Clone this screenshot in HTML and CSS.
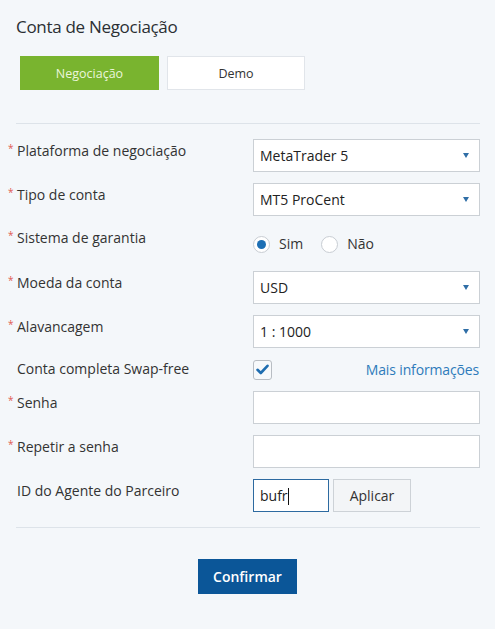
FILE: index.html
```html
<!DOCTYPE html>
<html lang="pt">
<head>
<meta charset="utf-8">
<title>Conta de Negociação</title>
<link rel="stylesheet" href="styles.css">
</head>
<body>
<div class="page">
  <h1 class="title">Conta de Negociação</h1>
  <div class="tabs">
    <div class="tab tab-active">Negociação</div>
    <div class="tab">Demo</div>
  </div>
  <div class="divider divider-top"></div>

  <div class="form">
    <div class="row">
      <div class="label"><span class="star">*</span>Plataforma de negociação</div>
      <div class="select"><span>MetaTrader 5</span><span class="arrow"></span></div>
    </div>
    <div class="row">
      <div class="label"><span class="star">*</span>Tipo de conta</div>
      <div class="select"><span>MT5 ProCent</span><span class="arrow"></span></div>
    </div>
    <div class="row">
      <div class="label label-radio"><span class="star">*</span>Sistema de garantia</div>
      <div class="radios">
        <span class="radio radio-on"></span><span class="radio-text">Sim</span>
        <span class="radio"></span><span class="radio-text">Não</span>
      </div>
    </div>
    <div class="row">
      <div class="label"><span class="star">*</span>Moeda da conta</div>
      <div class="select"><span>USD</span><span class="arrow"></span></div>
    </div>
    <div class="row">
      <div class="label"><span class="star">*</span>Alavancagem</div>
      <div class="select"><span>1 : 1000</span><span class="arrow"></span></div>
    </div>
    <div class="row row-check">
      <div class="label label-check"><span class="star"></span>Conta completa Swap-free</div>
      <div class="check-line">
        <span class="checkbox">
          <svg width="13" height="11" viewBox="0 0 13 11"><path d="M1.5 5.8 L4.8 9 L11.5 1.8" fill="none" stroke="#1f6db0" stroke-width="2.6" stroke-linecap="round" stroke-linejoin="round"/></svg>
        </span>
        <span class="link">Mais informações</span>
      </div>
    </div>
    <div class="row">
      <div class="label"><span class="star">*</span>Senha</div>
      <div class="input"></div>
    </div>
    <div class="row">
      <div class="label"><span class="star">*</span>Repetir a senha</div>
      <div class="input"></div>
    </div>
    <div class="row row-last">
      <div class="label"><span class="star"></span>ID do Agente do Parceiro</div>
      <div class="partner">
        <div class="input input-focus"><span>bufr</span><span class="caret"></span></div>
        <div class="btn-apply">Aplicar</div>
      </div>
    </div>
  </div>

  <div class="divider divider-bottom"></div>
  <div class="actions">
    <div class="btn-confirm">Confirmar</div>
  </div>
</div>
</body>
</html>
```

FILE: styles.css
```css
html, body {
  margin: 0;
  padding: 0;
  background: #f4f7fa;
}
body {
  font-family: "Open Sans", "Noto Sans", sans-serif;
  color: #333;
  width: 495px;
  height: 629px;
  overflow: hidden;
}
.page {
  padding: 15px 0 0 0;
}
.title {
  margin: 0 0 17px 16px;
  font-size: 17px;
  letter-spacing: -0.3px;
  line-height: 24px;
  font-weight: 400;
  color: #2b2f33;
}
.tabs {
  display: flex;
  gap: 8px;
  margin-left: 20px;
}
.tab {
  box-sizing: border-box;
  width: 138px;
  height: 34px;
  display: flex;
  align-items: center;
  justify-content: center;
  font-size: 12.5px;
  color: #333;
  background: #fff;
  border: 1px solid #e1e5ea;
}
.tab-active {
  width: 139px;
  background: #79b42f;
  border-color: #79b42f;
  color: #eaf6dc;
}
.divider {
  height: 1px;
  background: #dde3e9;
  margin-left: 16px;
  width: 464px;
}
.divider-top {
  margin-top: 33px;
}
.form {
  padding: 15px 0 0 8px;
}
.row {
  display: grid;
  grid-template-columns: 245px 227px;
  margin-bottom: 11px;
}
.row-last {
  margin-bottom: 15px;
}
.label {
  display: flex;
  align-items: flex-start;
  font-size: 14px;
  line-height: 20px;
  padding-top: 2px;
  color: #333;
}
.label-radio {
  padding-top: 1px;
}
.label-check {
  padding-top: 0;
}
.star {
  width: 9px;
  flex: none;
  color: #e05a52;
  font-size: 10px;
  line-height: 14px;
}
.select, .input {
  box-sizing: border-box;
  height: 33px;
  background: #fff;
  border: 1px solid #cbd0d5;
}
.select {
  display: flex;
  align-items: center;
  justify-content: space-between;
  padding: 0 10px 1px 6px;
  font-size: 14px;
  color: #222;
}
.arrow {
  width: 0;
  height: 0;
  border-left: 3.5px solid transparent;
  border-right: 3.5px solid transparent;
  border-top: 5px solid #2f6ea6;
  margin-top: 1px;
}
.radios {
  height: 33px;
  display: flex;
  align-items: center;
  font-size: 14px;
  color: #333;
}
.radio {
  box-sizing: border-box;
  width: 17px;
  height: 17px;
  border-radius: 50%;
  border: 1px solid #c8cdd3;
  background: #fff;
  display: flex;
  align-items: center;
  justify-content: center;
  margin-top: 2px;
}
.radio-on::after {
  content: "";
  width: 9px;
  height: 9px;
  border-radius: 50%;
  background: #1d6fb4;
}
.radio-text {
  margin: 0 18px 0 9px;
}
.check-line {
  display: flex;
  align-items: center;
  justify-content: space-between;
  height: 21px;
}
.checkbox {
  box-sizing: border-box;
  width: 19px;
  height: 20px;
  border: 1px solid #b8bdc3;
  border-radius: 3px;
  background: #f7f9fb;
  display: flex;
  align-items: center;
  justify-content: center;
}
.link {
  font-size: 14px;
  letter-spacing: -0.15px;
  color: #2e7bbb;
  margin-right: 1px;
}
.partner {
  display: flex;
  gap: 4px;
}
.input-focus {
  width: 76px;
  border-color: #2d6aa0;
  display: flex;
  align-items: center;
  padding: 0 0 1px 6px;
  font-size: 14px;
  color: #222;
}
.caret {
  width: 1px;
  height: 17px;
  background: #111;
  margin-top: 3px;
}
.btn-apply {
  box-sizing: border-box;
  width: 78px;
  height: 33px;
  background: #f3f5f7;
  border: 1px solid #cdd2d7;
  display: flex;
  align-items: center;
  justify-content: center;
  font-size: 14px;
  color: #333;
}
.actions {
  display: flex;
  justify-content: center;
  padding-top: 31px;
}
.btn-confirm {
  width: 99px;
  height: 35px;
  background: #0b5698;
  color: #fff;
  font-size: 14px;
  font-weight: 600;
  display: flex;
  align-items: center;
  justify-content: center;
}
```
